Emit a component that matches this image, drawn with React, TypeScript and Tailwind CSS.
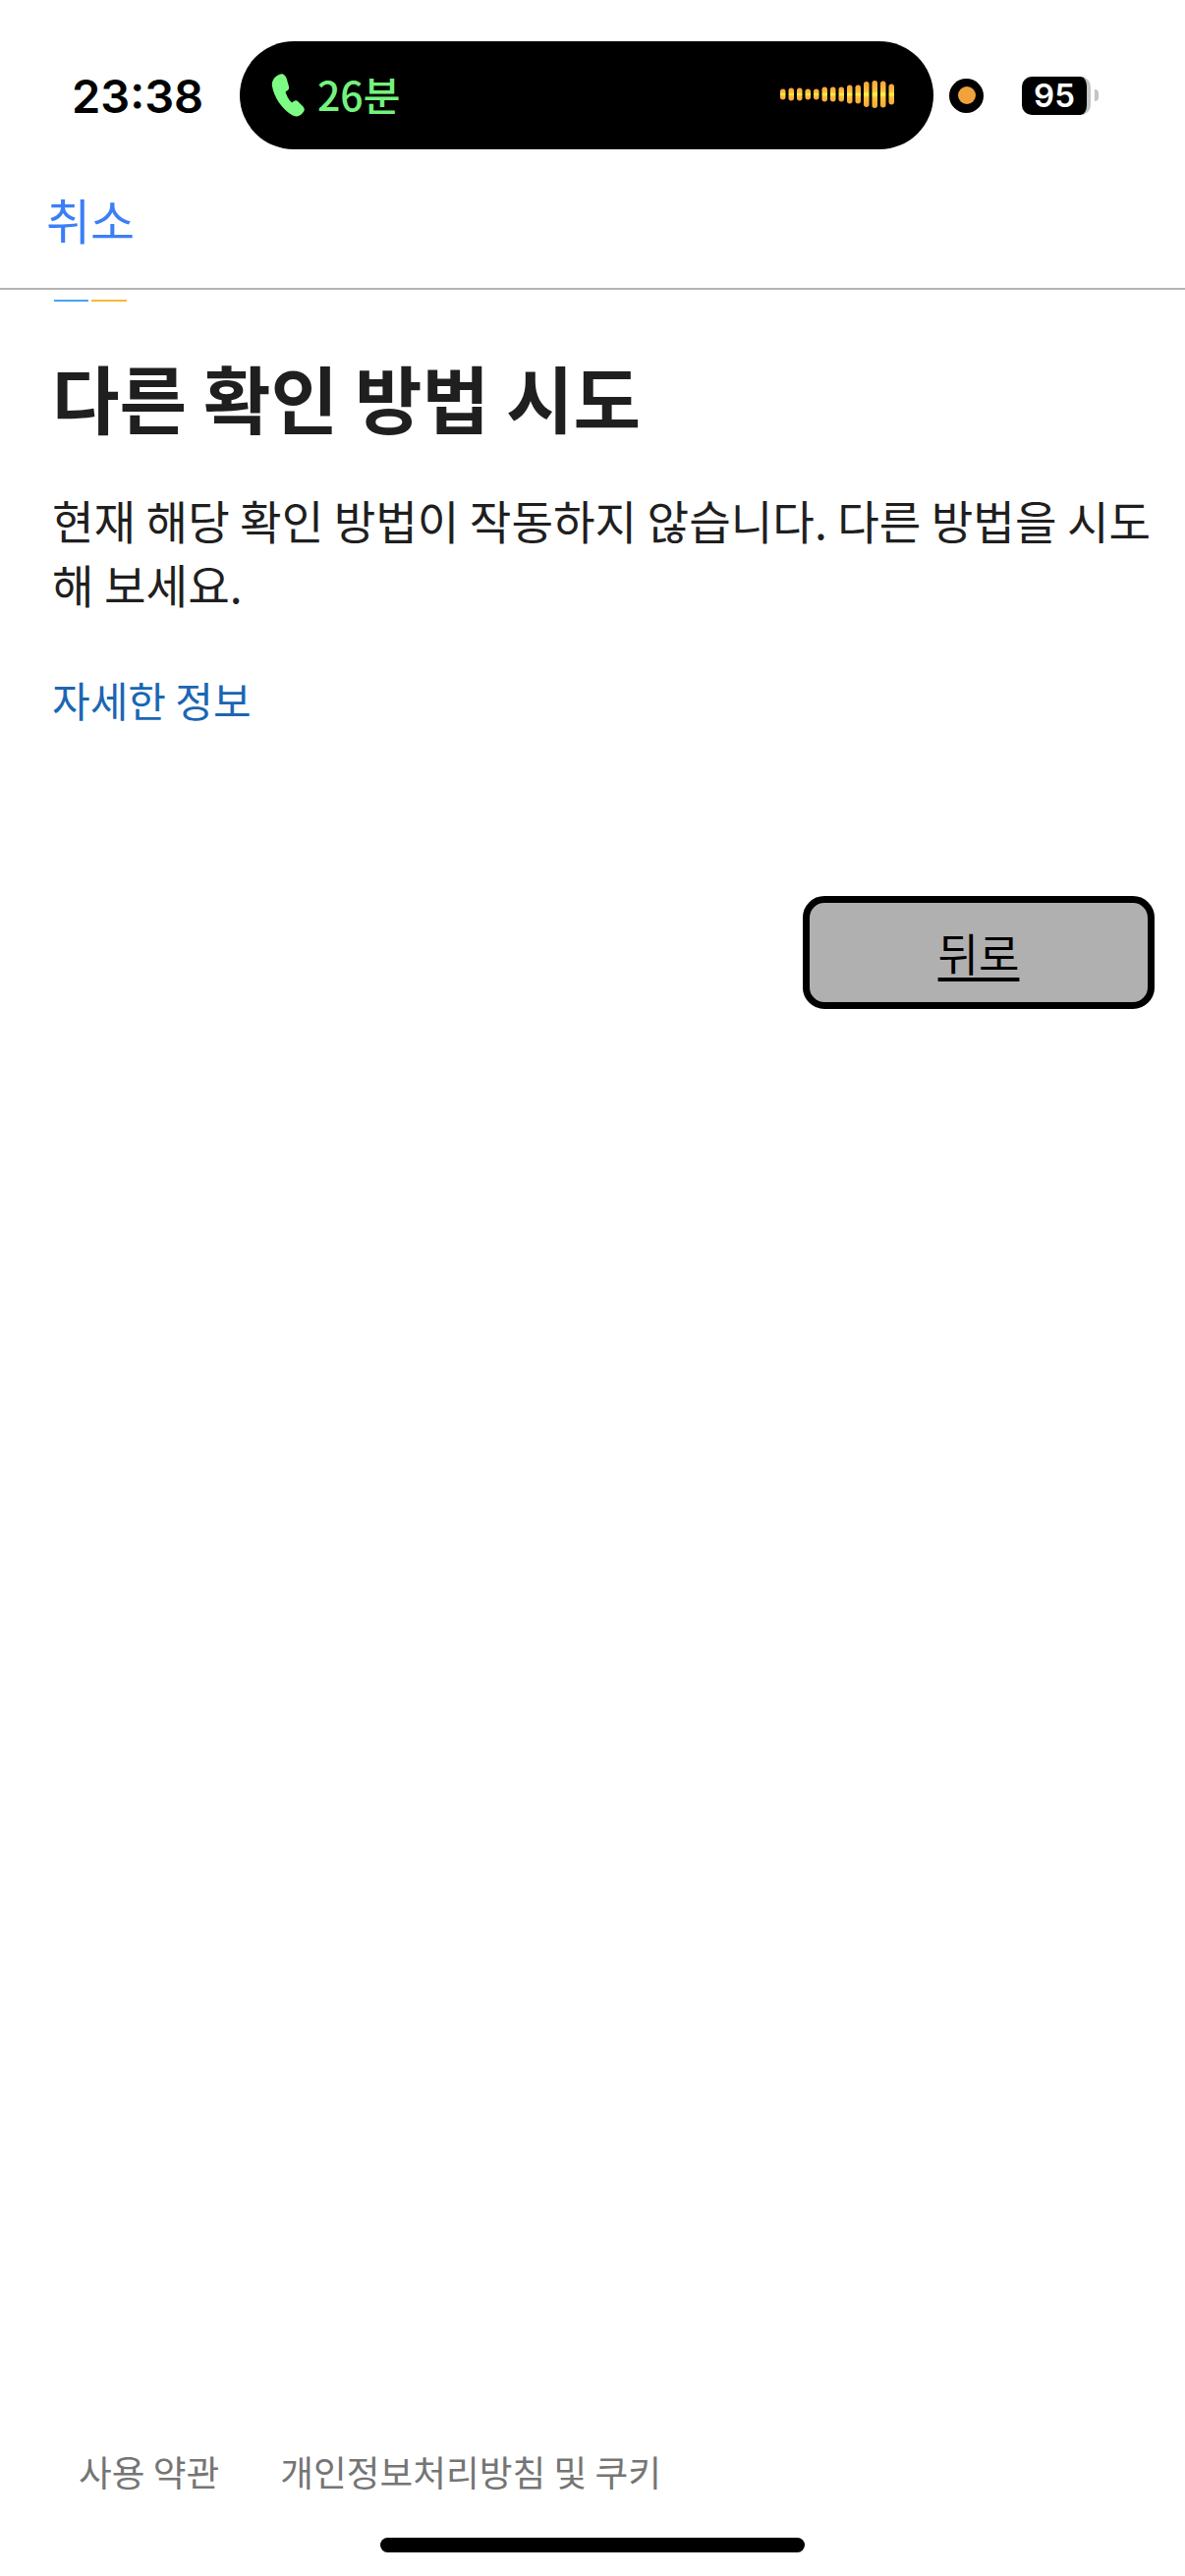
const KR = "font-['Noto_Sans_CJK_KR','Noto_Sans',sans-serif]";

const bars = [11, 13, 13, 11, 11, 15, 15, 15, 19, 19, 26, 28, 27, 21];

function PhoneIcon() {
  return (
    <svg width="34" height="44" viewBox="0 0 34 44" className="shrink-0" fill="#7dfc85">
      <path d="M8 1C12-1 15 2 16 6L18 13C18.500 15 18 16 16 17.500L14.500 18.500C15.500 22 18 27 21 29.500L23 28C24.500 27 26 27 27.500 28.500L32.500 33.500C34.500 35.500 34 38 32 40C29 43.500 25 44.500 21 42C11 36 3 24 1 13C0 8 3 3 8 1Z" />
    </svg>
  );
}

function Waveform() {
  return (
    <svg width="118" height="30" viewBox="0 0 118 30" className="shrink-0">
      <defs>
        <linearGradient id="bar" x1="0" y1="0" x2="0" y2="1">
          <stop offset="0" stopColor="#f7a53a" />
          <stop offset="0.38" stopColor="#fdc23c" />
          <stop offset="0.5" stopColor="#fff94a" />
          <stop offset="0.62" stopColor="#fdc23c" />
          <stop offset="1" stopColor="#f7a53a" />
        </linearGradient>
      </defs>
      {bars.map((h, i) => (
        <rect key={i} x={i * 8.5} y={15 - h / 2} width="5.500" height={h} rx="2.700" fill="url(#bar)" />
      ))}
    </svg>
  );
}

function StatusBar() {
  return (
    <div className="mt-[42px] flex h-[110px] items-center pl-[73px]">
      <span className="w-[171px] shrink-0 font-['Inter',sans-serif] text-[47px] font-semibold leading-none text-black">23:38</span>
      <div className="flex h-[110px] w-[706px] shrink-0 items-center rounded-[55px] bg-black pl-[32px] pr-[38px]">
        <PhoneIcon />
        <span className={`ml-[13px] ${KR} -mt-[3px] text-[41px] font-medium leading-none text-[#74f27e]`}>26분</span>
        <div className="-mt-[2px] ml-auto">
          <Waveform />
        </div>
      </div>
      <div className="ml-[16px] flex h-[35px] w-[35px] shrink-0 items-center justify-center rounded-full bg-black">
        <span className="h-[18px] w-[18px] rounded-full bg-[#f0a23c]" />
      </div>
      <div className="ml-[39px] flex items-center">
        <div className="flex h-[39px] w-[70px] items-center justify-center rounded-[10px] border-r-[4px] border-[#c4c4c4] bg-black">
          <span className="font-['Inter',sans-serif] text-[33px] font-semibold leading-none text-white">95</span>
        </div>
        <span className="ml-[4px] h-[12px] w-[4px] rounded-r-full bg-[#c4c4c4]" />
      </div>
    </div>
  );
}

export default function App() {
  return (
    <div className={`relative flex h-[2622px] w-[1206px] flex-col overflow-hidden bg-white ${KR}`}>
      <StatusBar />
      <div className="flex h-[143px] items-center border-b-2 border-[#b4b4b4] pl-[47px]">
        <span className="text-[49px] leading-none text-[#3b7ff6]">취소</span>
      </div>
      <div className="mt-[10px] flex gap-[3px] pl-[55px]">
        <span className="h-[2px] w-[35px] bg-[#4aa3ee]" />
        <span className="h-[2px] w-[36px] bg-[#f5b93a]" />
      </div>
      <div className="flex flex-1 flex-col pl-[53px] pr-[31px]">
        <h1 className="mt-[49px] text-[74.5px] font-bold leading-[96px] text-[#1f1f1f]">다른 확인 방법 시도</h1>
        <p className="mt-[44px] text-[46.3px] leading-[65px] text-[#1f1f1f]">
          현재 해당 확인 방법이 작동하지 않습니다. 다른 방법을 시도해 보세요.
        </p>
        <a className="mt-[56px] text-[42px] leading-[60px] text-[#1b66b3]">자세한 정보</a>
        <button className="mt-[170px] flex h-[115px] w-[358px] items-center justify-center self-end rounded-[22px] border-[7px] border-black bg-[#b0b0b0] text-[45px] leading-none text-black underline underline-offset-[6px]">
          뒤로
        </button>
        <div className="mt-auto flex gap-[62px] pb-[83px] pl-[27px] text-[36.7px] leading-[48px] text-[#757575]">
          <span>사용 약관</span>
          <span>개인정보처리방침 및 쿠키</span>
        </div>
      </div>
      <div className="absolute bottom-[24px] left-[387px] h-[15px] w-[432px] rounded-full bg-black" />
    </div>
  );
}
